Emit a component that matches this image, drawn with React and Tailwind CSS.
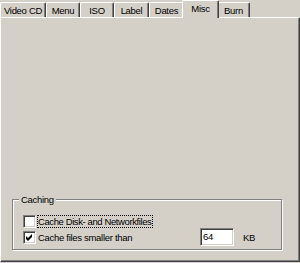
const tabs = [
  { label: "Video CD", w: "w-[46px]" },
  { label: "Menu", w: "w-[34px]" },
  { label: "ISO", w: "w-[34px]" },
  { label: "Label", w: "w-[35px]" },
  { label: "Dates", w: "w-[35px]" },
  { label: "Misc", w: "w-[37px]", active: true },
  { label: "Burn", w: "w-[33px]" },
];

const Tab = ({ label, w, active }) => (
  <div
    className={`${w} flex justify-center rounded-t-[2px] border-l border-t border-r border-l-white border-t-white border-r-[#404040] bg-[#d4d0c8] shadow-[inset_-1px_0_0_#808080] ${
      active ? "relative z-10 -mx-[2px] -mb-px h-[18px] pt-[2px]" : "h-[15px] pt-[2px]"
    }`}
  >
    {label}
  </div>
);

const Checkbox = ({ checked }) => (
  <div className="h-[13px] w-[13px] shrink-0 border border-b-white border-l-[#808080] border-r-white border-t-[#808080] bg-white shadow-[inset_1px_1px_0_#404040,inset_-1px_-1px_0_#d4d0c8]">
    {checked && (
      <svg width="11" height="11" viewBox="1 1 11 11" className="block">
        <polygon points="3,5 5,7 9,3 9,6 5,10 3,8" fill="#000" />
      </svg>
    )}
  </div>
);

export default function App() {
  return (
    <div className="h-[263px] w-[300px] overflow-hidden bg-[#d4d0c8] font-['Liberation_Sans',Arial,sans-serif] text-[9.5px] leading-[11px] tracking-[-0.3px] text-black">
      <div className="relative z-10 flex h-[17px] items-end">
        {tabs.map((t) => (
          <Tab key={t.label} {...t} />
        ))}
      </div>
      <div className="flex h-[245px] flex-col justify-end border-b border-l border-r border-t border-b-[#404040] border-l-white border-r-[#404040] border-t-white pb-[11px] pl-[11px] shadow-[inset_-1px_-1px_0_#808080]">
        <div className="relative h-[51px] w-[270px] border border-[#808080] shadow-[inset_1px_1px_0_#fff,1px_1px_0_#fff]">
          <span className="absolute -top-[6px] left-[6px] bg-[#d4d0c8] px-[2px]">Caching</span>
          <div className="flex flex-col pl-[10px] pt-[15px]">
            <div className="flex h-[13px] items-center">
              <Checkbox />
              <span className="ml-px border border-dotted border-black pr-px leading-[11px] tracking-[-0.4px]">
                Cache Disk- and Networkfiles
              </span>
            </div>
            <div className="flex h-[18px] items-center">
              <div className="flex w-[177px] items-center">
                <Checkbox checked />
                <span className="pl-[2px]">Cache files smaller than</span>
              </div>
              <div className="h-[18px] w-[34px] border border-b-white border-l-[#808080] border-r-white border-t-[#808080] bg-white pl-[2px] pt-[2px] shadow-[inset_1px_1px_0_#404040,inset_-1px_-1px_0_#d4d0c8]">
                64
              </div>
              <span className="ml-[9px]">KB</span>
            </div>
          </div>
        </div>
      </div>
    </div>
  );
}
